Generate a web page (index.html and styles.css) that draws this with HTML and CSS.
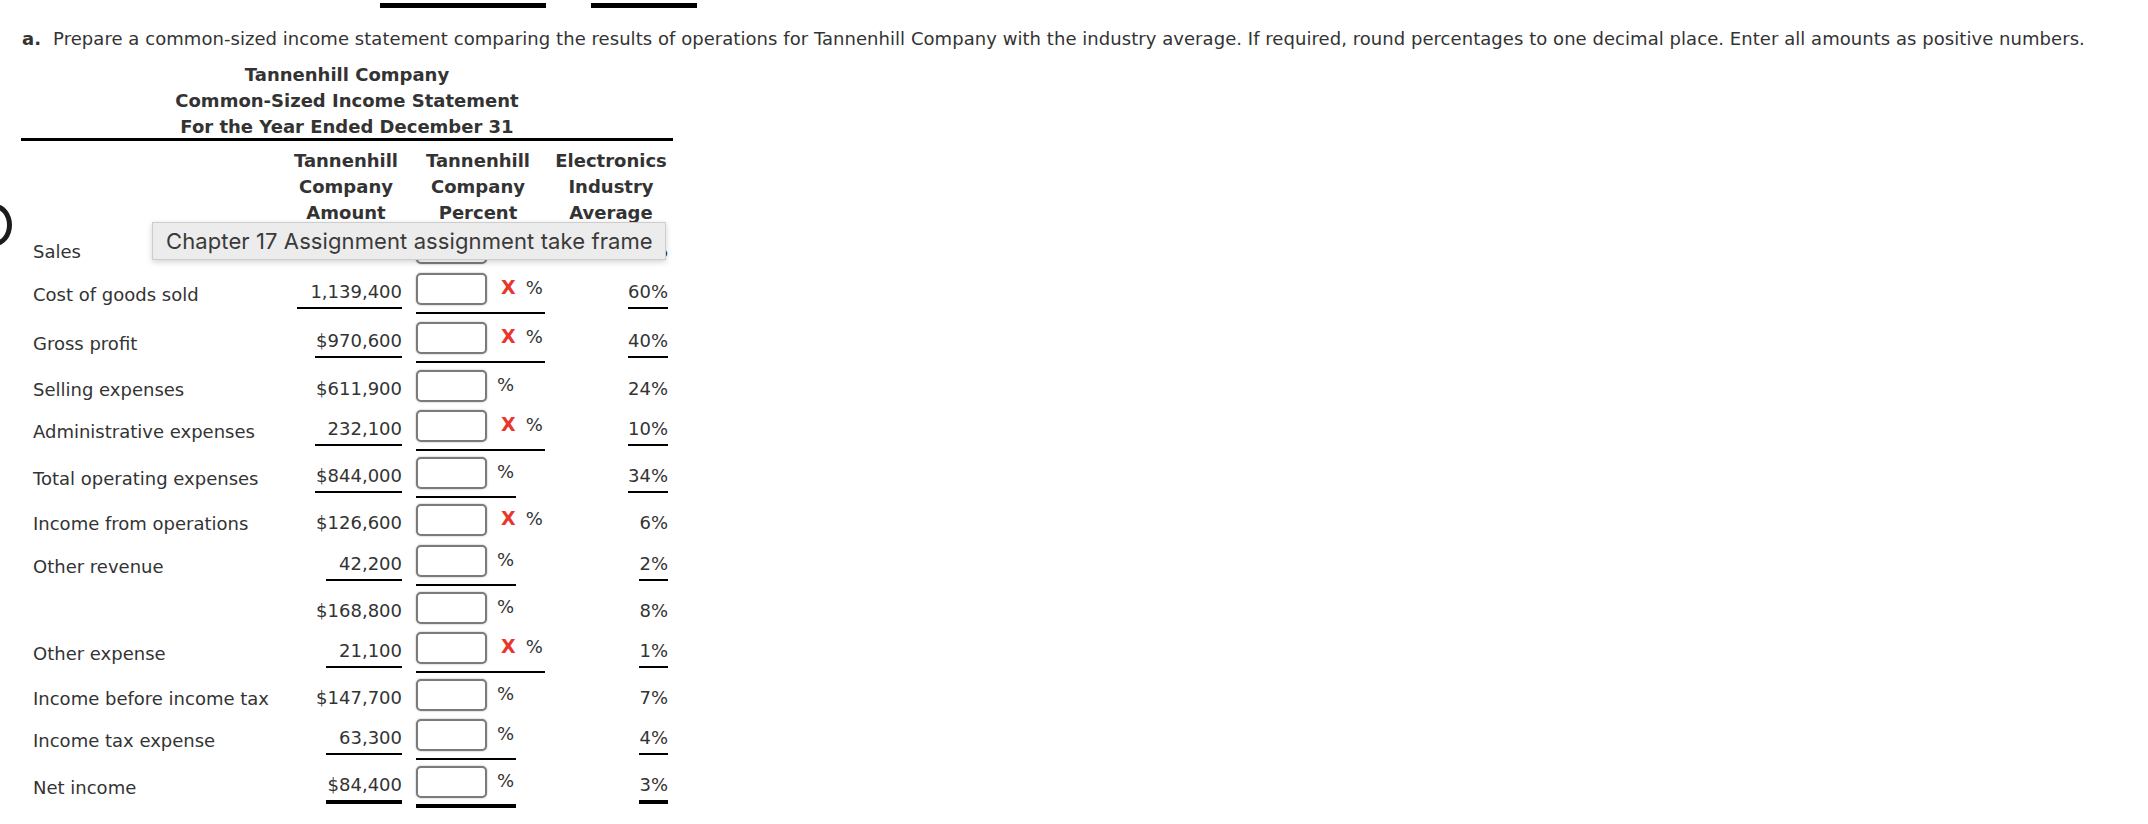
FILE: index.html
```html
<!DOCTYPE html>
<html lang="en">
<head>
<meta charset="utf-8">
<title>Common-Sized Income Statement</title>
<link rel="stylesheet" href="styles.css">
</head>
<body>
<div class="page">
  <div class="topbars"><span class="bar bar1"></span><span class="bar bar2"></span></div>
  <p class="instr"><strong class="step">a.</strong>Prepare a common-sized income statement comparing the results of operations for Tannenhill Company with the industry average. If required, round percentages to one decimal place. Enter all amounts as positive numbers.</p>

  <div class="stmt">
    <div class="title">Tannenhill Company<br>Common-Sized Income Statement<br>For the Year Ended December 31</div>
    <div class="rule"></div>

    <div class="row head">
      <div></div>
      <div class="ch">Tannenhill<br>Company<br>Amount</div>
      <div class="ch">Tannenhill<br>Company<br>Percent</div>
      <div class="ch">Electronics<br>Industry<br>Average</div>
    </div>

    <div class="row pb1">
      <div class="label">Sales</div>
      <div class="amt"><span class="v">$2,110,000</span></div>
      <div class="pct"><span class="box"></span><span class="pc">%</span></div>
      <div class="avg"><span class="v">100%</span></div>
    </div>

    <div class="row u pb2">
      <div class="label">Cost of goods sold</div>
      <div class="amt"><span class="v ul w7">1,139,400</span></div>
      <div class="pct ul"><span class="box"></span><span class="x">X</span><span class="pc">%</span></div>
      <div class="avg"><span class="v ul">60%</span></div>
    </div>

    <div class="row u pb1">
      <div class="label">Gross profit</div>
      <div class="amt"><span class="v ul w6">$970,600</span></div>
      <div class="pct ul"><span class="box"></span><span class="x">X</span><span class="pc">%</span></div>
      <div class="avg"><span class="v ul">40%</span></div>
    </div>

    <div class="row">
      <div class="label">Selling expenses</div>
      <div class="amt"><span class="v">$611,900</span></div>
      <div class="pct"><span class="box"></span><span class="pc">%</span></div>
      <div class="avg"><span class="v">24%</span></div>
    </div>

    <div class="row u">
      <div class="label">Administrative expenses</div>
      <div class="amt"><span class="v ul w6">232,100</span></div>
      <div class="pct ul"><span class="box"></span><span class="x">X</span><span class="pc">%</span></div>
      <div class="avg"><span class="v ul">10%</span></div>
    </div>

    <div class="row u">
      <div class="label">Total operating expenses</div>
      <div class="amt"><span class="v ul w6">$844,000</span></div>
      <div class="pct ul"><span class="box"></span><span class="pc">%</span></div>
      <div class="avg"><span class="v ul">34%</span></div>
    </div>

    <div class="row pb1">
      <div class="label">Income from operations</div>
      <div class="amt"><span class="v">$126,600</span></div>
      <div class="pct"><span class="box"></span><span class="x">X</span><span class="pc">%</span></div>
      <div class="avg"><span class="v">6%</span></div>
    </div>

    <div class="row u">
      <div class="label">Other revenue</div>
      <div class="amt"><span class="v ul w5">42,200</span></div>
      <div class="pct ul"><span class="box"></span><span class="pc">%</span></div>
      <div class="avg"><span class="v ul">2%</span></div>
    </div>

    <div class="row">
      <div class="label"></div>
      <div class="amt"><span class="v">$168,800</span></div>
      <div class="pct"><span class="box"></span><span class="pc">%</span></div>
      <div class="avg"><span class="v">8%</span></div>
    </div>

    <div class="row u">
      <div class="label">Other expense</div>
      <div class="amt"><span class="v ul w5">21,100</span></div>
      <div class="pct ul"><span class="box"></span><span class="x">X</span><span class="pc">%</span></div>
      <div class="avg"><span class="v ul">1%</span></div>
    </div>

    <div class="row">
      <div class="label">Income before income tax</div>
      <div class="amt"><span class="v">$147,700</span></div>
      <div class="pct"><span class="box"></span><span class="pc">%</span></div>
      <div class="avg"><span class="v">7%</span></div>
    </div>

    <div class="row u">
      <div class="label">Income tax expense</div>
      <div class="amt"><span class="v ul w5">63,300</span></div>
      <div class="pct ul"><span class="box"></span><span class="pc">%</span></div>
      <div class="avg"><span class="v ul">4%</span></div>
    </div>

    <div class="row u">
      <div class="label">Net income</div>
      <div class="amt"><span class="v ul2 w5">$84,400</span></div>
      <div class="pct ul2"><span class="box"></span><span class="pc">%</span></div>
      <div class="avg"><span class="v ul2">3%</span></div>
    </div>
  </div>

  <div class="tooltip">Chapter 17 Assignment assignment take frame</div>
  <div class="arc"></div>
</div>
</body>
</html>
```

FILE: styles.css
```css
* { box-sizing: border-box; }

html, body {
  margin: 0;
  padding: 0;
  background: #fff;
}

body {
  font-family: "DejaVu Sans", Verdana, sans-serif;
  font-size: 18px;
  color: #333;
}

.page {
  position: relative;
  width: 2148px;
  height: 824px;
  overflow: hidden;
  padding: 0 21px;
}

.topbars {
  display: flex;
  height: 8px;
  padding-top: 3px;
}

.bar {
  display: block;
  height: 5px;
  background: #000;
}

.bar1 { margin-left: 359px; width: 166px; }
.bar2 { margin-left: 45px; width: 106px; }

.instr {
  margin: 20px 0 0 1px;
  line-height: 22px;
  white-space: nowrap;
  letter-spacing: 0.05px;
}

.step {
  font-weight: bold;
  margin-right: 12px;
}

.stmt {
  width: 652px;
}

.title {
  margin-top: 12px;
  text-align: center;
  font-weight: bold;
  line-height: 26px;
}

.rule {
  margin-top: -2px;
  height: 3px;
  background: #000;
}

.row {
  display: grid;
  grid-template-columns: 255px 112px 124px 114px;
  column-gap: 14px;
  align-items: start;
  padding: 3px 0;
}

.row.head {
  padding: 7px 0 3px;
}

.row.pb1 { padding-bottom: 4px; }
.row.pb2 { padding-bottom: 5px; }

.ch {
  text-align: center;
  font-weight: bold;
  line-height: 26px;
}

.label {
  padding: 9px 0 0 12px;
  line-height: 21px;
  white-space: nowrap;
}

.row.u .label {
  padding-top: 11px;
}

.amt, .avg {
  padding-top: 8px;
  text-align: right;
  white-space: nowrap;
}

.v {
  display: inline-block;
  line-height: 21px;
  padding-bottom: 5px;
  text-align: right;
}

.v.ul { border-bottom: 2px solid #000; }
.v.ul2 { border-bottom: 4px solid #000; }

.w5 { min-width: 76px; }
.w6 { min-width: 87px; }
.w7 { min-width: 105px; }

.pct {
  display: inline-flex;
  align-items: flex-start;
  justify-self: start;
  padding: 0 2px 2px 0;
  white-space: nowrap;
}

.pct.ul {
  padding-bottom: 7px;
  border-bottom: 2px solid #000;
}

.pct.ul2 {
  padding-bottom: 6px;
  border-bottom: 4px solid #000;
}

.box {
  display: block;
  flex: none;
  width: 71px;
  height: 32px;
  border: 2px solid #7b7b7b;
  border-radius: 5px;
  background: #fff;
  box-shadow: 0 0 2px rgba(0, 0, 0, 0.35);
}

.x {
  margin-left: 14px;
  padding-top: 4px;
  line-height: 21px;
  font-size: 19px;
  font-weight: bold;
  color: #e8362c;
}

.pc {
  margin-left: 10px;
  padding-top: 4px;
  line-height: 21px;
}

.tooltip {
  position: absolute;
  left: 152px;
  top: 222px;
  width: 514px;
  height: 38px;
  padding: 0 0 0 13px;
  display: flex;
  align-items: center;
  background: #ececec;
  border: 1px solid #cdcdcd;
  box-shadow: 0 2px 6px rgba(0, 0, 0, 0.18);
  font-family: Inter, "Liberation Sans", sans-serif;
  font-size: 22px;
  letter-spacing: 0.1px;
  color: #3a3a3a;
  white-space: nowrap;
}

.arc {
  position: absolute;
  left: -22px;
  top: 204px;
  width: 34px;
  height: 42px;
  border: 5px solid #1c1c1c;
  border-radius: 50%;
}
```
